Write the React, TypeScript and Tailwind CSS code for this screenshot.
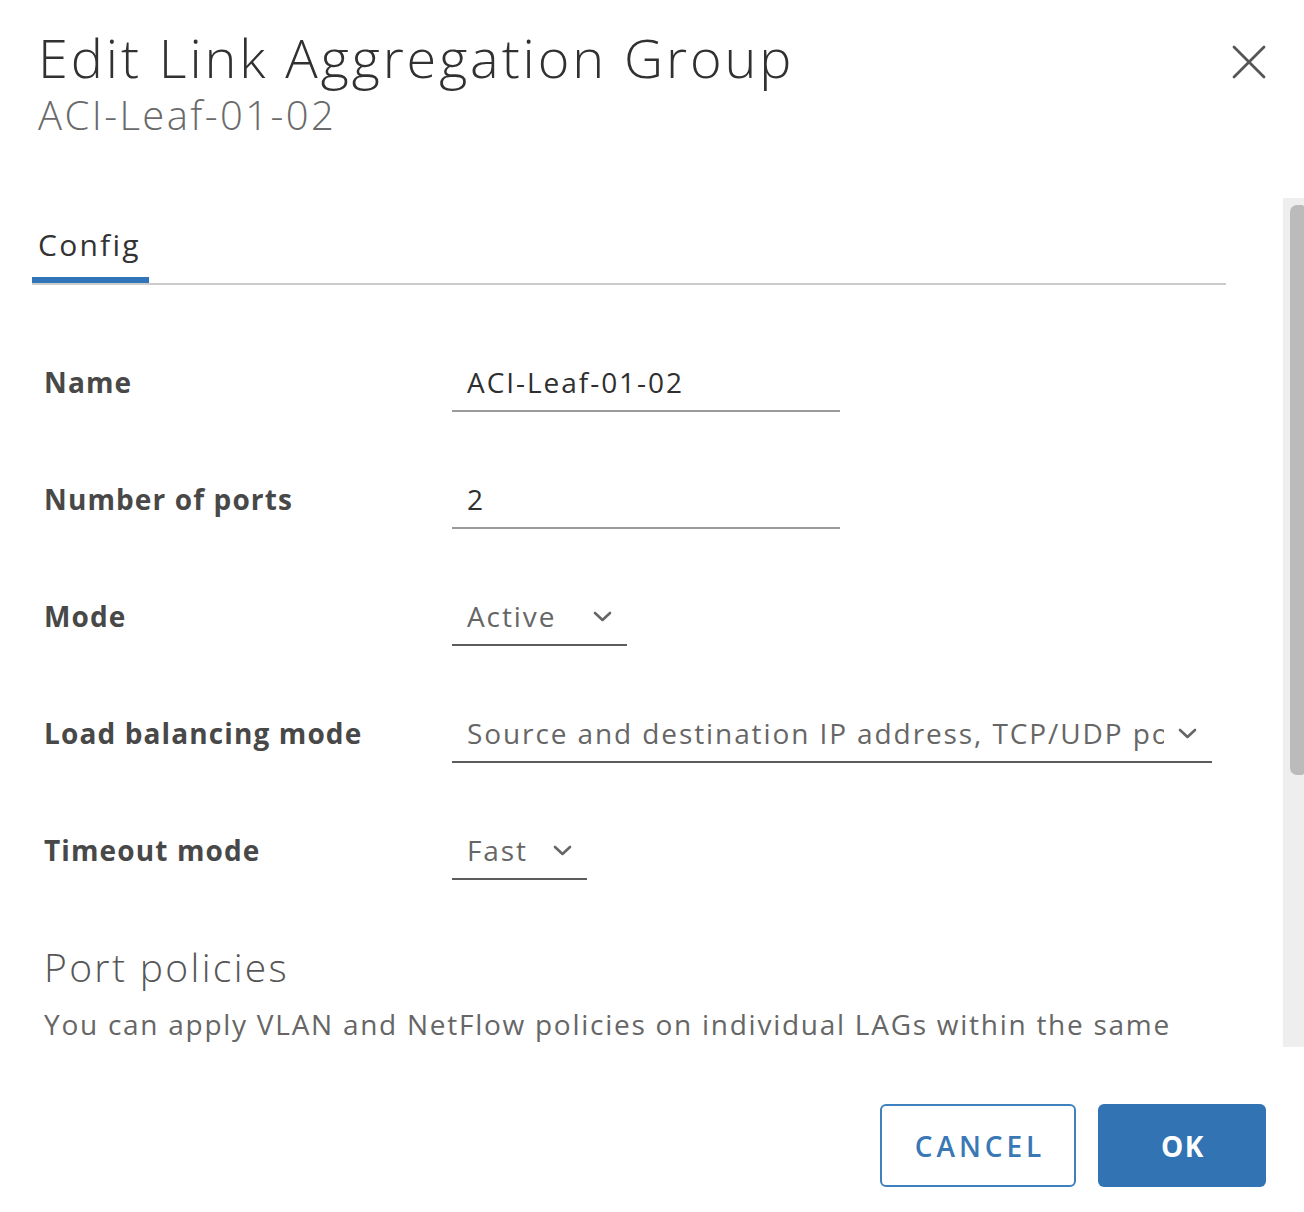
import React from "react";

function Chevron() {
  return (
    <svg width="19" height="11" viewBox="0 0 19 11" className="shrink-0">
      <path d="M2 2 L9.5 9 L17 2" fill="none" stroke="#666" strokeWidth="2.6" strokeLinecap="round" strokeLinejoin="round" />
    </svg>
  );
}

function Row({ label, children }: { label: string; children: React.ReactNode }) {
  return (
    <div className="flex items-start">
      <div className="w-[420px] pl-[12px] text-[28px] leading-[32px] font-bold tracking-[0.04em] text-[#484848]">{label}</div>
      {children}
    </div>
  );
}

function TextInput({ value, width }: { value: string; width: string }) {
  return (
    <div className={`${width} pl-[15px] pb-[12px] border-b-2 border-[#9a9a9a] text-[28px] leading-[32px] tracking-[0.07em] text-[#2f2f2f]`}>{value}</div>
  );
}

function SelectBox({ value, width }: { value: string; width: string }) {
  return (
    <div className={`${width} flex items-center justify-between pl-[15px] pr-[15px] pb-[12px] border-b-2 border-[#5c5c5c]`}>
      <div className="flex-1 overflow-hidden whitespace-nowrap text-[28px] leading-[40px] my-[-4px] tracking-[0.068em] text-[#666] mr-[14px]">{value}</div>
      <Chevron />
    </div>
  );
}

export default function App() {
  return (
    <div className="w-[1304px] h-[1212px] bg-white flex flex-col overflow-hidden" style={{ fontFamily: "'Open Sans', Lato, sans-serif" }}>
      {/* Header */}
      <div className="flex justify-between pl-[38px] pr-[38px] pt-[25px] h-[198px]">
        <div>
          <div className="text-[54px] leading-[64px] font-light tracking-[0.054em] text-[#313131]">Edit Link Aggregation Group</div>
          <div className="mt-[2px] text-[40px] leading-[48px] font-light tracking-[0.06em] text-[#6a6a6a]">ACI-Leaf-01-02</div>
        </div>
        <div className="pt-[20px]">
          <svg width="34" height="34" viewBox="0 0 34 34">
            <path d="M2 2 L32 32 M32 2 L2 32" stroke="#555" strokeWidth="2.8" strokeLinecap="round" />
          </svg>
        </div>
      </div>

      {/* Body */}
      <div className="h-[849px] flex">
        <div className="flex-1 overflow-hidden pl-[32px] pr-[57px]">
          <div className="pt-[29px] border-b-2 border-[#cccccc] flex">
            <div className="pl-[6px] pr-[8px] border-b-[6px] border-[#2f75b8]">
              <div className="text-[30px] leading-[36px] tracking-[0.075em] text-[#333] pb-[14px]">Config</div>
            </div>
          </div>

          <div className="mt-[81px] flex flex-col gap-[71px]">
            <Row label="Name"><TextInput value="ACI-Leaf-01-02" width="w-[388px]" /></Row>
            <Row label="Number of ports"><TextInput value="2" width="w-[388px]" /></Row>
            <Row label="Mode"><SelectBox value="Active" width="w-[175px]" /></Row>
            <Row label="Load balancing mode"><SelectBox value="Source and destination IP address, TCP/UDP port" width="w-[760px]" /></Row>
            <Row label="Timeout mode"><SelectBox value="Fast" width="w-[135px]" /></Row>
          </div>

          <div className="pl-[12px] mt-[64px] text-[39px] leading-[46px] font-light tracking-[0.06em] text-[#565656]">Port policies</div>
          <div className="pl-[12px] mt-[18px] text-[28px] leading-[32px] tracking-[0.062em] text-[#666] whitespace-nowrap">
            You can apply VLAN and NetFlow policies on individual LAGs within the same
          </div>
        </div>
        <div className="w-[21px] bg-[#eeeeee] pt-[7px] flex justify-end">
          <div className="w-[14px] h-[570px] bg-[#bbbbbb] rounded-l-[7px] rounded-r-[2px]" />
        </div>
      </div>

      {/* Footer */}
      <div className="flex justify-end gap-[22px] pr-[38px] pt-[57px]">
        <button className="w-[196px] h-[83px] border-2 border-[#3f80bf] rounded-[6px] bg-white text-[#3a78b5] text-[28px] font-semibold tracking-[0.14em] pl-[4px]">CANCEL</button>
        <button className="w-[168px] h-[83px] rounded-[6px] bg-[#3274b3] text-white text-[28px] font-bold tracking-[0.06em] pl-[2px]">OK</button>
      </div>
    </div>
  );
}
